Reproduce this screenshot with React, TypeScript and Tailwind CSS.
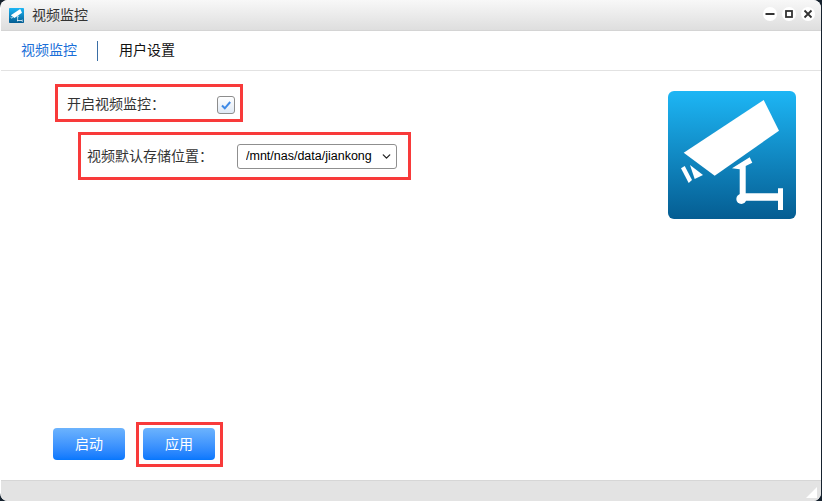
import { ChevronDown } from 'lucide-react';

const FONT = "font-['Liberation_Sans','Noto_Sans_CJK_SC',sans-serif]";

function CameraLogo({ className }: { className: string }) {
  return (
    <svg viewBox="0 0 128 128" className={className}>
      <defs>
        <linearGradient id="logoBg" x1="0" y1="0" x2="0" y2="1">
          <stop offset="0" stopColor="#1db6f5" />
          <stop offset="1" stopColor="#055d92" />
        </linearGradient>
      </defs>
      <rect width="128" height="128" rx="6" fill="url(#logoBg)" />
      <g fill="#fff">
        <polygon points="15.7,61.7 95.7,9 111,39.7 46.7,84.7" />
        <polygon points="22,74 35,84 26.7,88" />
        <polygon points="13,77.3 16.7,75 24,89 20.7,92" />
        <polygon points="64,77.3 81.7,66.3 84.3,71.7 77.7,75 77.7,102.3 110,102.3 110,97.3 115,97.3 115,119 110,119 110,109.7 76.7,109.7 71.7,104 71.7,78.3" />
        <circle cx="73.3" cy="108" r="5" />
      </g>
    </svg>
  );
}

function WinButton({ children }: { children: React.ReactNode }) {
  return (
    <div className="flex h-[14px] w-[14px] items-center justify-center rounded-full bg-white">
      <svg viewBox="0 0 10 10" className="h-[10px] w-[10px]" fill="none" stroke="#333" strokeWidth="1.8">
        {children}
      </svg>
    </div>
  );
}

function BlueButton({ label }: { label: string }) {
  return (
    <button className="h-[32px] w-[72px] rounded-[4px] bg-gradient-to-b from-[#6cb3fd] to-[#0577fd] text-[14px] text-white">
      {label}
    </button>
  );
}

export default function App() {
  return (
    <div className={`h-[501px] w-[822px] overflow-hidden bg-[#16222e] ${FONT}`}>
      <div className="flex h-[501px] w-[821px] flex-col overflow-hidden rounded-[8px] bg-white pl-px">
        {/* title bar */}
        <div className="flex h-[31px] shrink-0 items-center border-b border-[#d4d4d4] bg-gradient-to-b from-[#f8f8f8] to-[#dedede] pl-[8px] pr-[6px]">
          <CameraLogo className="h-[15px] w-[15px]" />
          <span className="ml-[8px] pt-px text-[14px] text-[#333]">视频监控</span>
          <div className="mb-[2px] ml-auto flex gap-[5px]">
            <WinButton>
              <path d="M0.5 5h9" />
            </WinButton>
            <WinButton>
              <rect x="2" y="2" width="6" height="6" />
            </WinButton>
            <WinButton>
              <path d="M1.5 1.5l7 7M8.5 1.5l-7 7" />
            </WinButton>
          </div>
        </div>

        {/* tabs */}
        <div className="flex h-[40px] shrink-0 items-center border-b border-[#e2e2e2] pl-[20px]">
          <span className="text-[14px] text-[#1a6fd8]">视频监控</span>
          <div className="ml-[20px] mr-[21px] h-[20px] w-px bg-[#3a6ea5]" />
          <span className="text-[14px] text-[#111]">用户设置</span>
        </div>

        {/* content */}
        <div className="flex min-h-0 flex-1 justify-between pr-[25px]">
          <div className="flex flex-col pl-[54px]">
            <div className="mt-[13px] flex h-[38px] w-[188px] items-center justify-between border-[3px] border-[#f83a3a] pl-[9px] pr-[5px] pt-[3px] text-[14px] text-[#333]">
              <span>开启视频监控：</span>
              <div className="flex h-[18px] w-[18px] items-center justify-center rounded-[3px] border border-[#8d8d8d] bg-gradient-to-b from-[#fff] to-[#dfe9f5]">
                <svg viewBox="0 0 12 12" className="h-[12px] w-[12px]" fill="none" stroke="#3f8ae6" strokeWidth="2">
                  <path d="M2 6.5l2.8 2.8L10.2 3" />
                </svg>
              </div>
            </div>
            <div className="ml-[23px] mt-[10px] flex h-[48px] w-[333px] items-center border-[3px] border-[#f83a3a] pl-[6px] text-[14px] text-[#333]">
              <span className="w-[150px]">视频默认存储位置：</span>
              <div className="relative h-[25px] w-[160px]">
                <select className="h-[25px] w-[160px] appearance-none rounded-[3px] border border-[#8f8f8f] bg-white pl-[8px] text-[12.5px] text-black">
                  <option>/mnt/nas/data/jiankong</option>
                </select>
                <ChevronDown className="absolute right-[4px] top-[6px] h-[13px] w-[13px] text-[#222]" strokeWidth={2.4} />
              </div>
            </div>
            <div className="-ml-[2px] mb-[13px] mt-auto flex items-end">
              <div className="mb-[7px] flex">
                <BlueButton label="启动" />
              </div>
              <div className="ml-[11px] flex border-[3px] border-[#f83a3a] pb-[4px] pl-[4px] pr-[5px] pt-[3px]">
                <BlueButton label="应用" />
              </div>
            </div>
          </div>
          <CameraLogo className="mt-[20px] h-[128px] w-[128px]" />
        </div>

        {/* status bar */}
        <div className="flex h-[21px] shrink-0 items-end justify-end border-t border-[#d6d6d6] bg-[#e3e3e3] pb-[3px] pr-[4px]">
          <svg viewBox="0 0 11 11" className="h-[11px] w-[11px]">
            <polygon points="11,0 11,11 0,11" fill="#fff" />
          </svg>
        </div>
      </div>
    </div>
  );
}
